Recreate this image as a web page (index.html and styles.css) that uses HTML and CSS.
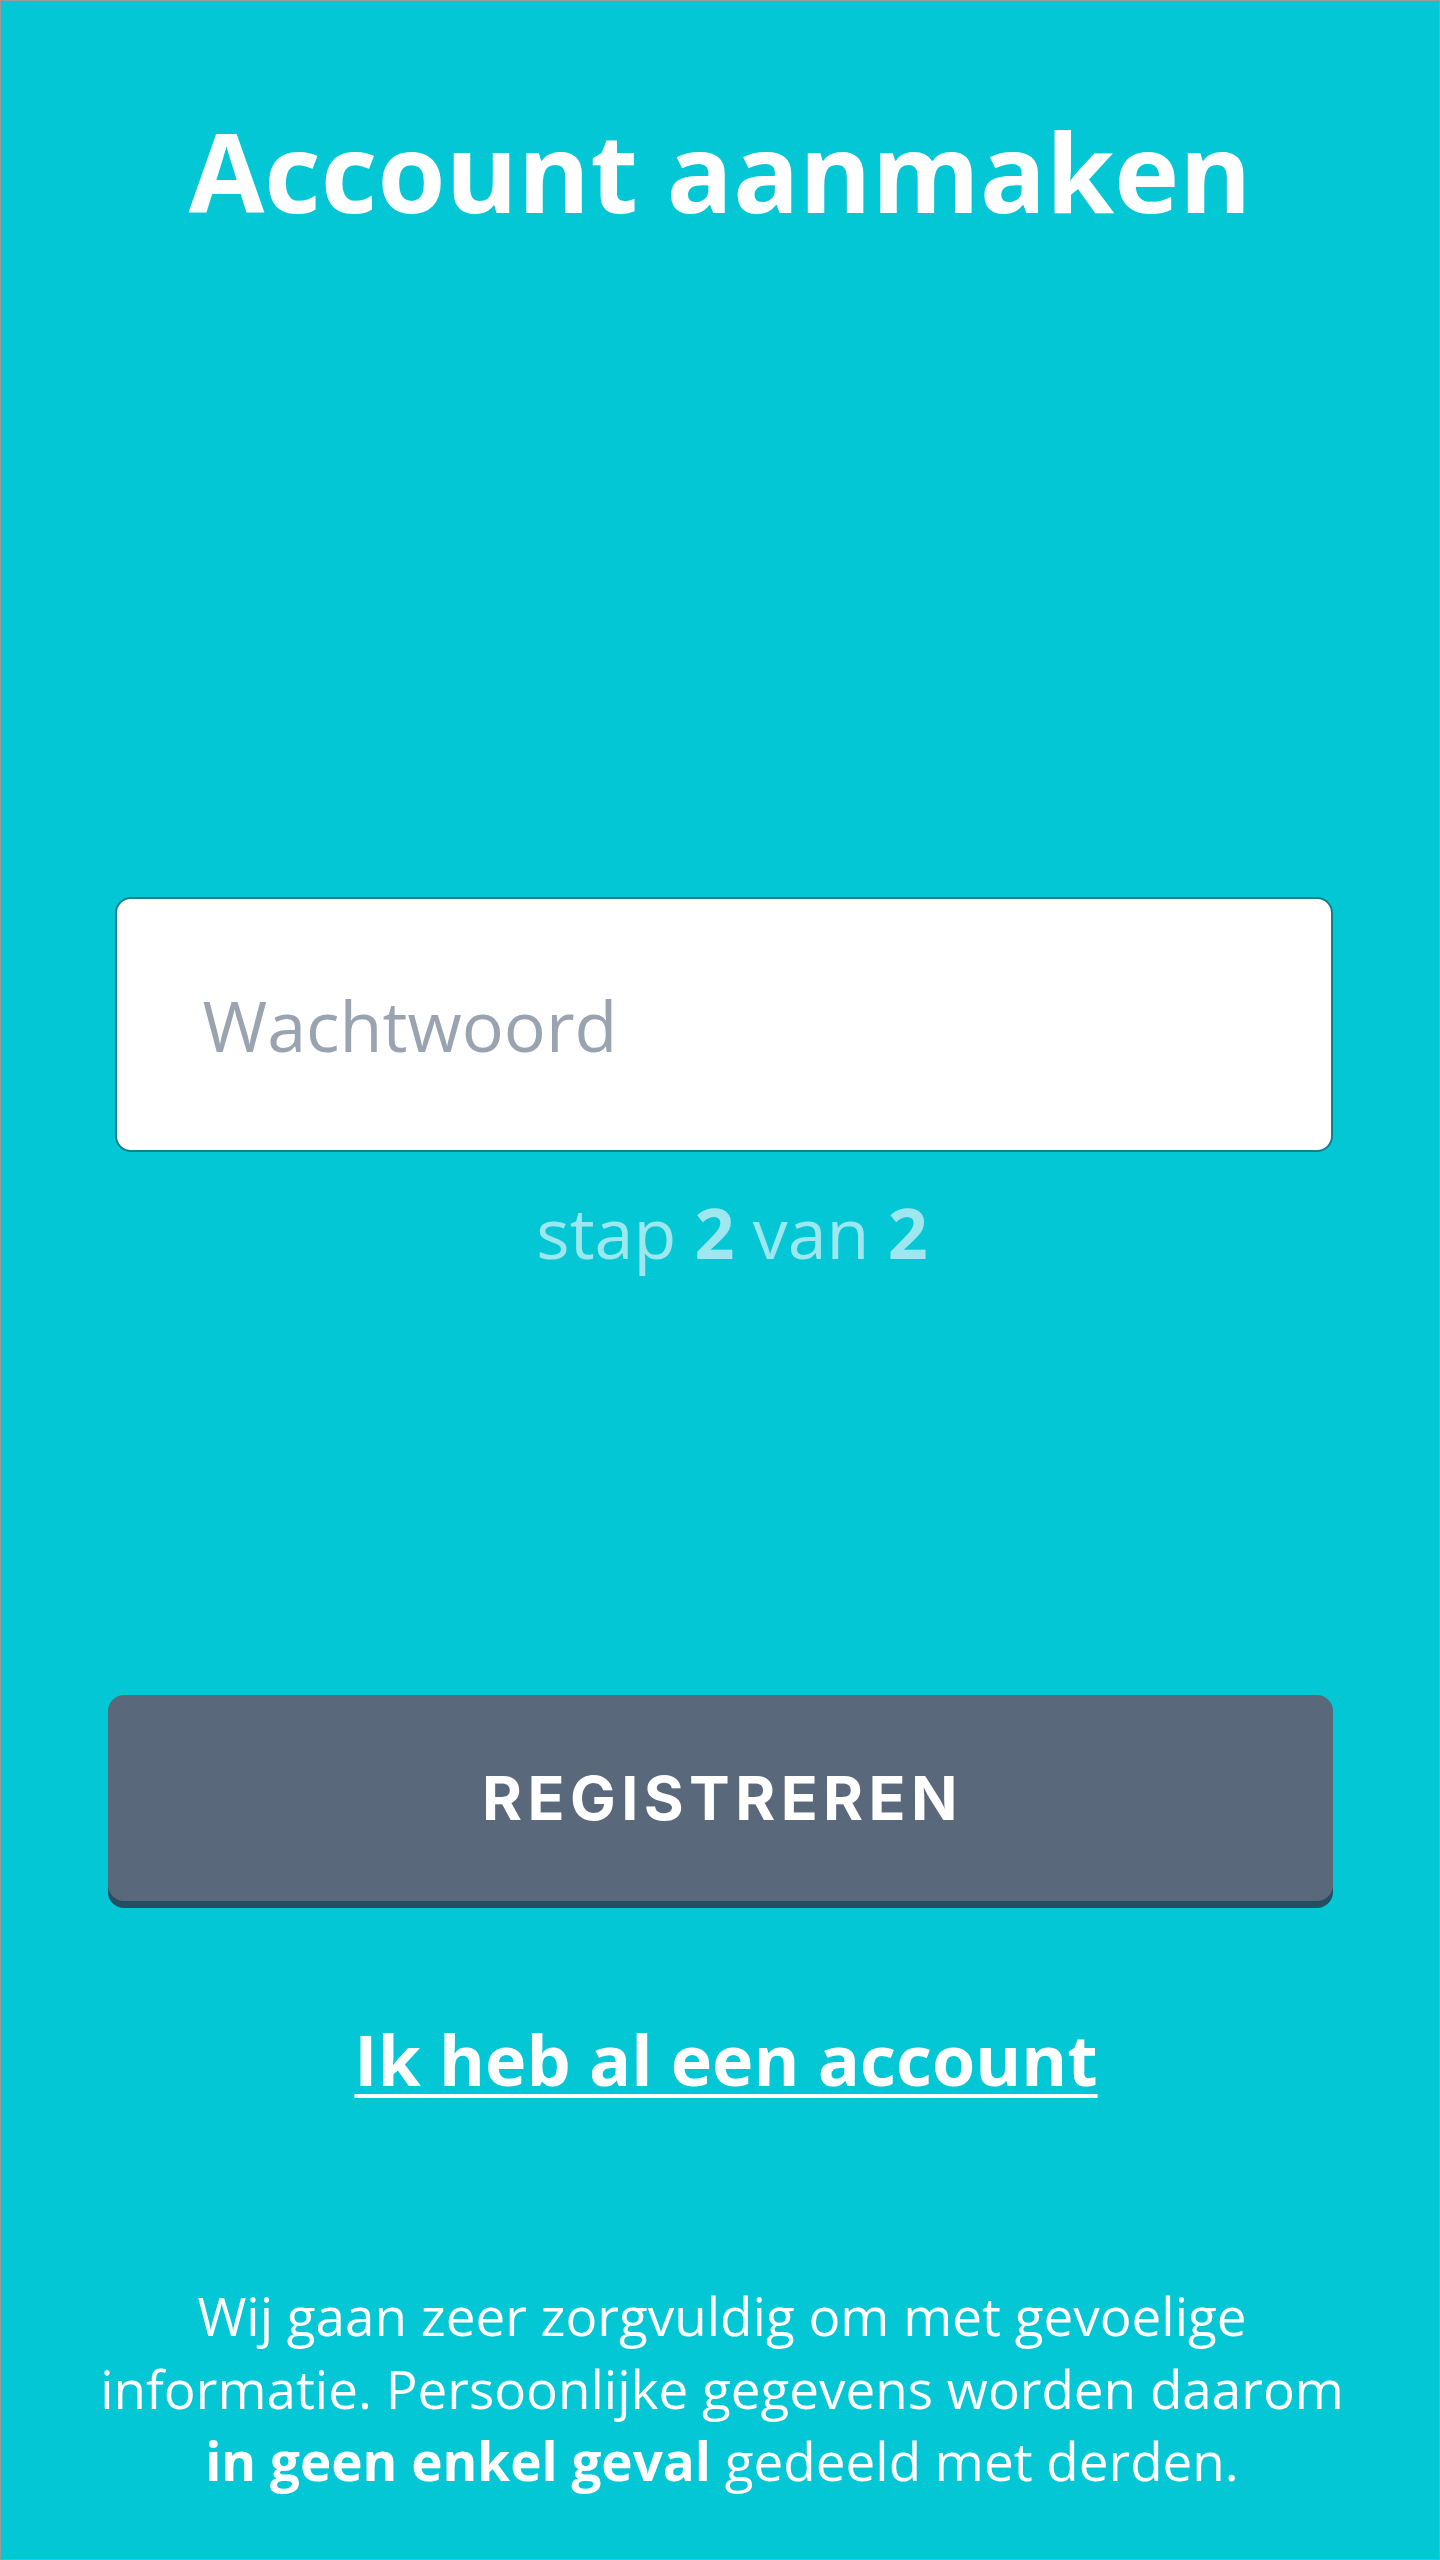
FILE: index.html
```html
<!DOCTYPE html>
<html lang="nl">
<head>
<meta charset="utf-8">
<title>Account aanmaken</title>
<link rel="stylesheet" href="styles.css">
</head>
<body>
<main class="screen">
  <h1 class="title">Account aanmaken</h1>
  <form class="form">
    <input class="field" type="password" placeholder="Wachtwoord">
    <p class="step">stap <b>2</b> van <b>2</b></p>
    <button class="btn" type="button">REGISTREREN</button>
    <a class="login" href="#">Ik heb al een account</a>
  </form>
  <p class="note">Wij gaan zeer zorgvuldig om met gevoelige<br>informatie. Persoonlijke gegevens worden daarom<br><b>in geen enkel geval</b> gedeeld met derden.</p>
</main>
</body>
</html>
```

FILE: styles.css
```css
* { box-sizing: border-box; }
html, body { margin: 0; padding: 0; }
body {
  background: #04c7d6;
  font-family: "Open Sans", "Noto Sans", sans-serif;
  color: #ffffff;
}
.screen {
  width: 1440px;
  height: 2560px;
  border: 1px solid #9a9a9a;
  display: flex;
  flex-direction: column;
  align-items: center;
}
.title {
  margin: 114px 0 0;
  font-size: 110px;
  font-weight: 700;
  line-height: 1;
  color: #ffffff;
}
.form {
  width: 100%;
  display: flex;
  flex-direction: column;
  align-items: center;
  margin-top: 672px;
}
.field {
  width: 1218px;
  height: 255px;
  margin-left: 7px;
  border: 2px solid #137f8b;
  border-radius: 16px;
  background: #ffffff;
  padding: 0 0 0 86px;
  font-family: "Open Sans", sans-serif;
  font-size: 70px;
  line-height: 1;
  color: #3a4a5a;
  outline: none;
}
.field::placeholder { color: #9aa4b1; opacity: 1; }
.step {
  margin: 45px 0 0 24px;
  font-size: 70px;
  line-height: 1;
  color: #9fe7ee;
}
.step b { font-weight: 700; }
.btn {
  margin-top: 428px;
  width: 1225px;
  height: 206px;
  border: 0;
  border-radius: 16px;
  background: #5a687b;
  box-shadow: 0 7px 0 #234f63;
  color: #ffffff;
  font-family: "Inter", "Liberation Sans", sans-serif;
  font-weight: 700;
  font-size: 61px;
  letter-spacing: 5.4px;
  padding: 0 0 0 5px;
  cursor: pointer;
}
.login {
  margin: 123px 0 0 12px;
  font-size: 70px;
  font-weight: 700;
  line-height: 1;
  color: #ffffff;
  text-decoration: underline;
  text-decoration-thickness: 4px;
  text-underline-offset: 8px;
}
.note {
  margin: 186px 0 0 4px;
  font-size: 53px;
  line-height: 72.5px;
  text-align: center;
  color: #ffffff;
}
.note b { font-weight: 700; }
```
